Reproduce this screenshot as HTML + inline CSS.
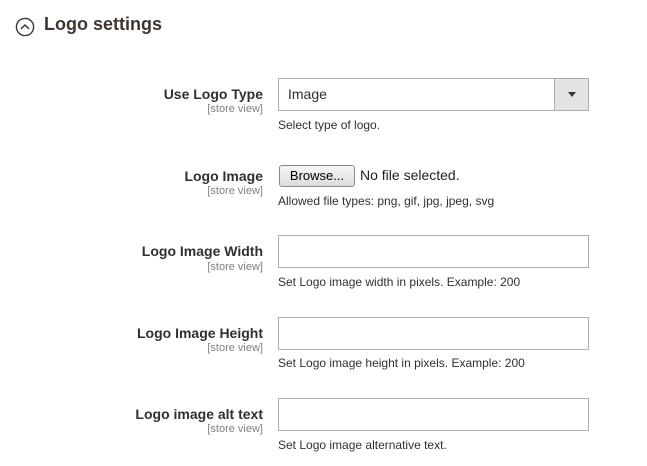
<!DOCTYPE html>
<html><head><style>
body{margin:0;width:647px;height:466px;background:#fff;font-family:"Liberation Sans",sans-serif;color:#303030;position:relative;overflow:hidden}
.a{position:absolute}
.t{left:44px;top:14px;font-size:18px;font-weight:bold;color:#41362f}
.lab{right:384px;text-align:right;font-size:14px;font-weight:bold;color:#303030;line-height:16px}
.sv{right:384px;text-align:right;font-size:11px;color:#808080;line-height:12px}
.in{left:278px;width:309px;height:31px;border:1px solid #adadad;background:#fff;box-sizing:border-box}
.note{left:278px;font-size:12px;color:#303030}
</style></head><body>
<svg class="a" style="left:15px;top:17px" width="20" height="20" viewBox="0 0 20 20"><circle cx="10" cy="10" r="8.6" fill="none" stroke="#41362f" stroke-width="1.4"/><path d="M6 11.8 L10 8 L14 11.8" fill="none" stroke="#41362f" stroke-width="1.5"/></svg>
<div class="a t">Logo settings</div>

<div class="a lab" style="top:86px">Use Logo Type</div>
<div class="a sv" style="top:103px">[store view]</div>
<div class="a in" style="top:78px;width:311px;height:33px"><div class="a" style="left:9px;top:7px;font-size:14px">Image</div><div class="a" style="right:0;top:0;width:33px;height:31px;background:#e3e3e3;border-left:1px solid #adadad"></div><div class="a" style="right:12px;top:13px;width:0;height:0;border-left:4px solid transparent;border-right:4px solid transparent;border-top:5px solid #41362f"></div></div>
<div class="a note" style="top:118px">Select type of logo.</div>

<div class="a lab" style="top:168px">Logo Image</div>
<div class="a sv" style="top:185px">[store view]</div>
<div class="a" style="left:279px;top:165px;width:74px;height:20px;border:1px solid #8a8a8a;border-radius:3px;background:linear-gradient(#f6f6f6,#dcdcdc);font-size:13px;text-align:center;line-height:20px;color:#000">Browse...</div>
<div class="a" style="left:360px;top:167px;font-size:14px;color:#222">No file selected.</div>
<div class="a note" style="top:194px">Allowed file types: png, gif, jpg, jpeg, svg</div>

<div class="a lab" style="top:243px">Logo Image Width</div>
<div class="a sv" style="top:261px">[store view]</div>
<div class="a in" style="top:235px;height:33px;width:311px"></div>
<div class="a note" style="top:275px">Set Logo image width in pixels. Example: 200</div>

<div class="a lab" style="top:325px">Logo Image Height</div>
<div class="a sv" style="top:342px">[store view]</div>
<div class="a in" style="top:317px;height:33px;width:311px"></div>
<div class="a note" style="top:356px">Set Logo image height in pixels. Example: 200</div>

<div class="a lab" style="top:406px">Logo image alt text</div>
<div class="a sv" style="top:423px">[store view]</div>
<div class="a in" style="top:398px;height:33px;width:311px"></div>
<div class="a note" style="top:438px">Set Logo image alternative text.</div>
</body></html>
